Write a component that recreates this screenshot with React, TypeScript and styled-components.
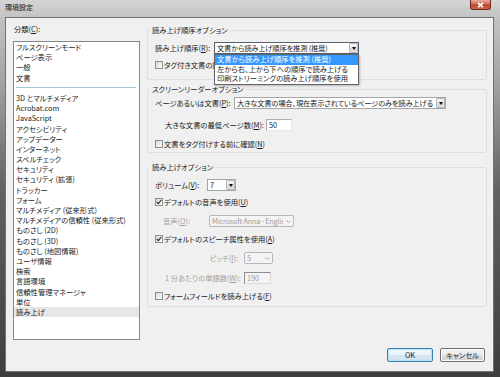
import React from 'react'
import styled, { createGlobalStyle } from 'styled-components'

const GlobalStyle = createGlobalStyle`
  * { box-sizing: border-box; }
  html, body { margin: 0; padding: 0; background: #3c3c3c; }
  body {
    font-family: 'Noto Sans CJK JP', sans-serif;
    font-size: 7.3px;
    font-feature-settings: 'palt' 1;
    color: #1b1b1b;
  }
  u { text-underline-offset: 1px; }
`

const categoriesTop = ['フルスクリーンモード', 'ページ表示', '一般', '文書']
const categories = [
  '3D とマルチメディア',
  'Acrobat.com',
  'JavaScript',
  'アクセシビリティ',
  'アップデーター',
  'インターネット',
  'スペルチェック',
  'セキュリティ',
  'セキュリティ (拡張)',
  'トラッカー',
  'フォーム',
  'マルチメディア (従来形式)',
  'マルチメディアの信頼性 (従来形式)',
  'ものさし (2D)',
  'ものさし (3D)',
  'ものさし (地図情報)',
  'ユーザ情報',
  '検索',
  '言語環境',
  '信頼性管理マネージャ',
  '単位',
  '読み上げ',
]
const readingOrders = [
  '文書から読み上げ順序を推測 (推奨)',
  '左から右、上から下への順序で読み上げる',
  '印刷ストリーミングの読み上げ順序を使用',
]

const Window = styled.div`
  width: 500px;
  height: 377px;
  display: flex;
  flex-direction: column;
  background: linear-gradient(180deg, #d4d4d4 0%, #c2c2c2 5%, #a2a2a2 22%, #626262 50%, #3e3e3e 100%);
`

const TitleBar = styled.div`
  height: 17px;
  flex: none;
  display: flex;
  align-items: flex-start;
  justify-content: space-between;
  padding: 0 9px 0 5px;
`

const Title = styled.span`
  margin-top: 3px;
  line-height: 9px;
  font-size: 7px;
  color: #111;
`

const CloseButton = styled.span`
  width: 21px;
  height: 10px;
  display: flex;
  align-items: center;
  justify-content: center;
  border: 1px solid #6b2a22;
  border-top: none;
  border-radius: 0 0 3px 3px;
  background: linear-gradient(180deg, #e9a99c 0%, #d26a55 45%, #c0412b 55%, #cf6a4f 100%);
`

const Client = styled.div`
  height: 355px;
  margin: 0 6px 0 5px;
  display: flex;
  flex-direction: column;
  padding: 7px 6px 9px 7px;
  border: 1px solid #6f7378;
  background: #f0f0f0;
`

const Main = styled.div`
  height: 315px;
  flex: none;
  display: flex;
  gap: 7px;
`

const Sidebar = styled.div`
  width: 127px;
  flex: none;
  display: flex;
  flex-direction: column;
`

const FieldLabel = styled.div`
  height: 16px;
  line-height: 9px;
  padding-left: 1px;
`

const ListBox = styled.ul`
  flex: 1;
  margin: 0;
  padding: 0;
  list-style: none;
  border: 1px solid #828790;
  background: #fff;
`

const ListItem = styled.li<{ $selected?: boolean }>`
  height: 10.2px;
  line-height: 10.2px;
  padding-left: 2px;
  white-space: nowrap;
  background: ${(p) => (p.$selected ? '#e6e6e6' : 'transparent')};
`

const ListSeparator = styled.li`
  height: 10.2px;
  display: flex;
  align-items: center;
  padding: 0 3px 0 2px;

  &::before {
    content: '';
    flex: 1;
    height: 1px;
    background: #a4c6dd;
  }
`

const Content = styled.div`
  flex: 1;
  display: flex;
  flex-direction: column;
`

const Group = styled.fieldset<{ $mt?: number; $pt?: number; $pb?: number }>`
  margin: ${(p) => p.$mt ?? 0}px 0 0;
  padding: ${(p) => p.$pt ?? 0}px 7px ${(p) => p.$pb ?? 0}px;
  min-width: 0;
  border: 1px solid #d9e0e5;
  border-radius: 2px;
`

const Legend = styled.legend`
  margin-left: -5px;
  padding: 0 2px;
  line-height: 10px;
`

const Row = styled.div<{ $h: number; $indent?: number }>`
  display: flex;
  align-items: center;
  height: ${(p) => p.$h}px;
  padding-left: ${(p) => p.$indent ?? 0}px;
  white-space: nowrap;
`

const Label = styled.span<{ $w?: number; $right?: boolean; $disabled?: boolean }>`
  flex: none;
  width: ${(p) => (p.$w ? `${p.$w}px` : 'auto')};
  padding-right: ${(p) => (p.$right ? 6 : 0)}px;
  text-align: ${(p) => (p.$right ? 'right' : 'left')};
  color: ${(p) => (p.$disabled ? '#a2a2a2' : 'inherit')};
`

const Select = styled.div<{ $w: number; $focused?: boolean; $disabled?: boolean }>`
  position: relative;
  flex: none;
  display: flex;
  align-items: center;
  width: ${(p) => p.$w}px;
  height: 12px;
  padding-left: 2px;
  border: 1px solid ${(p) => (p.$focused ? '#56606e' : p.$disabled ? '#b4b8bb' : '#a5a5a5')};
  border-radius: ${(p) => (p.$disabled ? 2 : 0)}px;
  background: ${(p) => (p.$disabled ? '#f4f4f4' : '#fff')};
  color: ${(p) => (p.$disabled ? '#9d9d9d' : 'inherit')};
`

const SelectValue = styled.span`
  flex: 1;
  overflow: hidden;
  line-height: 10px;
  letter-spacing: -0.2px;
`

const DropButton = styled.span`
  flex: none;
  width: 9px;
  height: 10px;
  display: flex;
  align-items: center;
  justify-content: center;
  border: 1px solid #b7b7b7;
  border-radius: 1px;
  background: linear-gradient(180deg, #f6f6f6 0%, #e6e6e6 50%, #d4d4d4 51%, #e2e2e2 100%);

  &::after {
    content: '';
    border-left: 2.5px solid transparent;
    border-right: 2.5px solid transparent;
    border-top: 3px solid #111;
  }
`

const DisabledArrow = styled.span`
  flex: none;
  width: 10px;
  display: flex;
  justify-content: center;
`

const Popup = styled.ul`
  position: absolute;
  top: calc(100% + 1px);
  left: -1px;
  right: -1px;
  z-index: 2;
  margin: 0;
  padding: 0;
  list-style: none;
  background: #fff;
  border: 1px solid #646464;
  box-shadow: 1px 1px 2px rgba(0, 0, 0, 0.25);
`

const PopupItem = styled.li<{ $active?: boolean }>`
  height: 9.7px;
  line-height: 9.7px;
  padding-left: 2px;
  color: ${(p) => (p.$active ? '#fff' : '#1b1b1b')};
  background: ${(p) => (p.$active ? '#3399ff' : 'transparent')};
`

const Input = styled.span<{ $w: number; $disabled?: boolean }>`
  flex: none;
  width: ${(p) => p.$w}px;
  height: 12px;
  line-height: 10px;
  padding-left: 2px;
  border: 1px solid;
  border-color: ${(p) => (p.$disabled ? '#8e8e8e #dadada #dadada #8e8e8e' : '#abadb3 #e3e9ef #e3e9ef #abadb3')};
  background: ${(p) => (p.$disabled ? '#f4f4f4' : '#fff')};
  color: ${(p) => (p.$disabled ? '#9d9d9d' : 'inherit')};
`

const CheckBox = styled.span`
  flex: none;
  width: 8px;
  height: 8px;
  margin-right: 1px;
  display: flex;
  align-items: center;
  justify-content: center;
  border: 1px solid #8e8f8f;
  background: linear-gradient(135deg, #d8d8d8 0%, #f0f0f0 60%, #fdfdfd 100%);
`

const Footer = styled.div`
  display: flex;
  justify-content: flex-end;
  gap: 7px;
  margin-top: 8px;
  padding-right: 2px;
`

const Button = styled.span<{ $w: number; $default?: boolean }>`
  width: ${(p) => p.$w}px;
  height: 14px;
  display: flex;
  align-items: center;
  justify-content: center;
  border: 1px solid ${(p) => (p.$default ? '#3c7fb1' : '#707070')};
  border-radius: 2px;
  background: ${(p) =>
    p.$default
      ? 'linear-gradient(180deg, #f3f9fd 0%, #e6f1f9 48%, #d5e6f2 52%, #cfe2f0 100%)'
      : 'linear-gradient(180deg, #f2f2f2 0%, #ebebeb 48%, #dddddd 52%, #cfcfcf 100%)'};
  box-shadow: inset 0 0 0 1px ${(p) => (p.$default ? '#b9e2f7' : '#fbfbfb')};
`

const Check = ({ checked }: { checked?: boolean }) => (
  <CheckBox>
    {checked && (
      <svg width="6" height="6" viewBox="0 0 6 6">
        <path d="M0.8 3 L2.4 4.7 L5.3 1" fill="none" stroke="#2b2b2b" strokeWidth="1.2" />
      </svg>
    )}
  </CheckBox>
)

const Chevron = () => (
  <DisabledArrow>
    <svg width="5" height="3" viewBox="0 0 5 3">
      <path d="M0.5 0.5 L2.5 2.5 L4.5 0.5" fill="none" stroke="#a8a8a8" strokeWidth="1" />
    </svg>
  </DisabledArrow>
)

export default function App() {
  return (
    <Window>
      <GlobalStyle />
      <TitleBar>
        <Title>環境設定</Title>
        <CloseButton>
          <svg width="7" height="6" viewBox="0 0 7 6">
            <path d="M1 0.8 L6 5.2 M6 0.8 L1 5.2" stroke="#fff" strokeWidth="1.6" />
          </svg>
        </CloseButton>
      </TitleBar>
      <Client>
        <Main>
          <Sidebar>
            <FieldLabel>
              分類(<u>C</u>):
            </FieldLabel>
            <ListBox>
              {categoriesTop.map((c) => (
                <ListItem key={c}>{c}</ListItem>
              ))}
              <ListSeparator />
              {categories.map((c) => (
                <ListItem key={c} $selected={c === '読み上げ'}>
                  {c}
                </ListItem>
              ))}
            </ListBox>
          </Sidebar>

          <Content>
            <Group $pt={3} $pb={7}>
              <Legend>読み上げ順序オプション</Legend>
              <Row $h={20}>
                <Label $w={59}>
                  読み上げ順序(<u>R</u>):
                </Label>
                <Select $w={145} $focused>
                  <SelectValue>{readingOrders[0]}</SelectValue>
                  <DropButton />
                  <Popup>
                    {readingOrders.map((o, i) => (
                      <PopupItem key={o} $active={i === 0}>
                        {o}
                      </PopupItem>
                    ))}
                  </Popup>
                </Select>
              </Row>
              <Row $h={14}>
                <Check />
                タグ付き文書の読み上げ順序を上書き(<u>O</u>)
              </Row>
            </Group>

            <Group $mt={4} $pb={2}>
              <Legend>スクリーンリーダーオプション</Legend>
              <Row $h={18}>
                <Label $w={79}>
                  ページあるいは文書(<u>P</u>):
                </Label>
                <Select $w={212}>
                  <SelectValue>大きな文書の場合、現在表示されているページのみを読み上げる</SelectValue>
                  <DropButton />
                </Select>
              </Row>
              <Row $h={26} $indent={10}>
                <Label $w={101}>
                  大きな文書の最低ページ数(<u>M</u>):
                </Label>
                <Input $w={26}>50</Input>
              </Row>
              <Row $h={12}>
                <Check />
                文書をタグ付けする前に確認(<u>N</u>)
              </Row>
            </Group>

            <Group $mt={9} $pt={4}>
              <Legend>読み上げオプション</Legend>
              <Row $h={18}>
                <Label $w={52}>
                  ボリューム(<u>V</u>):
                </Label>
                <Select $w={29}>
                  <SelectValue>7</SelectValue>
                  <DropButton />
                </Select>
              </Row>
              <Row $h={16}>
                <Check checked />
                デフォルトの音声を使用(<u>U</u>)
              </Row>
              <Row $h={22} $indent={8}>
                <Label $w={46} $disabled>
                  音声(<u>O</u>):
                </Label>
                <Select $w={85} $disabled>
                  <SelectValue>Microsoft Anna - English (United States)</SelectValue>
                  <Chevron />
                </Select>
              </Row>
              <Row $h={14}>
                <Check checked />
                デフォルトのスピーチ属性を使用(<u>A</u>)
              </Row>
              <Row $h={24} $indent={10}>
                <Label $w={79} $right $disabled>
                  ピッチ(<u>I</u>):
                </Label>
                <Select $w={29} $disabled>
                  <SelectValue>5</SelectValue>
                  <Chevron />
                </Select>
              </Row>
              <Row $h={16} $indent={10}>
                <Label $w={79} $right $disabled>
                  1 分あたりの単語数(<u>W</u>):
                </Label>
                <Input $w={27} $disabled>
                  190
                </Input>
              </Row>
              <Row $h={20}>
                <Check />
                フォームフィールドを読み上げる(<u>F</u>)
              </Row>
            </Group>
          </Content>
        </Main>

        <Footer>
          <Button $w={46} $default>
            OK
          </Button>
          <Button $w={45}>キャンセル</Button>
        </Footer>
      </Client>
    </Window>
  )
}
